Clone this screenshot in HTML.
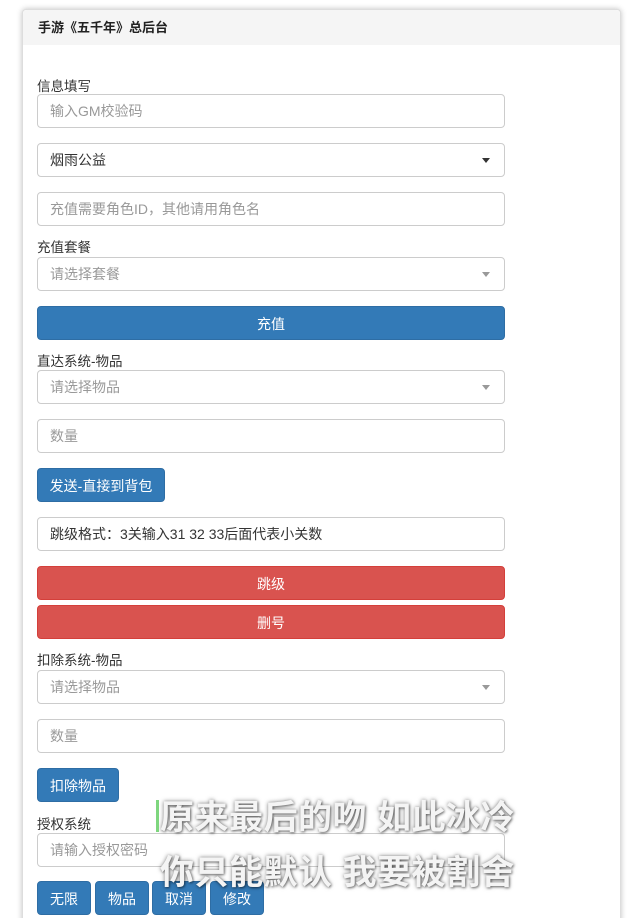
<!DOCTYPE html>
<html style="width:637px;height:918px;overflow:hidden"><head><meta charset="utf-8"><style>
*{box-sizing:border-box;margin:0;padding:0}
body{width:637px;height:918px;background:#fff;font-family:"Liberation Sans","Noto Sans CJK SC",sans-serif;font-size:14px;color:#333;position:relative;overflow:hidden}
.card{position:absolute;left:22px;top:9px;width:599px;height:920px;border:1px solid #ddd;border-radius:4px;box-shadow:0 0 6px rgba(0,0,0,.25);background:#fff}
.hd{position:absolute;left:0;top:0;right:0;height:35px;background:#f5f5f5;border-radius:4px 4px 0 0;font-weight:bold;font-size:13px;line-height:35px;padding-left:15px;color:#222}
.a{position:absolute}
.in{position:absolute;left:37px;width:468px;height:34px;border:1px solid #ccc;border-radius:4px;line-height:32px;padding-left:12px;color:#999}
.lb{position:absolute;left:37px;font-size:13.5px;color:#333}
.btn{position:absolute;height:34px;border-radius:4px;color:#fff;text-align:center;line-height:34px;background:#337ab7;border:1px solid #2e6da4}
.red{background:#d9534f;border-color:#d43f3a}
.caret{position:absolute;right:14px;top:14px;width:0;height:0;border-left:4px solid transparent;border-right:4px solid transparent;border-top:5px solid #333}
.caret.g{border-top-color:#999}
.sub{position:absolute;left:160px;font-size:34px;font-weight:bold;color:#f4f4f4;letter-spacing:0.5px;text-shadow:0 0 4px rgba(0,0,0,.5),1px 1px 2px rgba(0,0,0,.4);white-space:nowrap}
</style></head><body>
<div class="card"><div class="hd">手游《五千年》总后台</div></div>
<div class="lb" style="top:75px">信息填写</div>
<div class="in" style="top:94px">输入GM校验码</div>
<div class="in" style="top:143px;color:#333">烟雨公益<span class="caret"></span></div>
<div class="in" style="top:192px">充值需要角色ID，其他请用角色名</div>
<div class="lb" style="top:236px">充值套餐</div>
<div class="in" style="top:257px">请选择套餐<span class="caret g"></span></div>
<div class="btn" style="left:37px;top:306px;width:468px">充值</div>
<div class="lb" style="top:350px">直达系统-物品</div>
<div class="in" style="top:370px">请选择物品<span class="caret g"></span></div>
<div class="in" style="top:419px">数量</div>
<div class="btn" style="left:37px;top:468px;width:128px">发送-直接到背包</div>
<div class="in" style="top:517px;color:#333">跳级格式：3关输入31 32 33后面代表小关数</div>
<div class="btn red" style="left:37px;top:566px;width:468px">跳级</div>
<div class="btn red" style="left:37px;top:605px;width:468px">删号</div>
<div class="lb" style="top:649px">扣除系统-物品</div>
<div class="in" style="top:670px">请选择物品<span class="caret g"></span></div>
<div class="in" style="top:719px">数量</div>
<div class="btn" style="left:37px;top:768px;width:82px">扣除物品</div>
<div class="lb" style="top:813px">授权系统</div>
<div class="in" style="top:833px">请输入授权密码</div>
<div class="btn" style="left:37px;top:881px;width:54px">无限</div>
<div class="btn" style="left:95px;top:881px;width:54px">物品</div>
<div class="btn" style="left:152px;top:881px;width:54px">取消</div>
<div class="btn" style="left:210px;top:881px;width:54px">修改</div>
<div class="sub" style="top:790px">原来最后的吻 如此冰冷</div>
<div class="sub" style="top:845px">你只能默认 我要被割舍</div>
<div class="a" style="left:156px;top:800px;width:3px;height:32px;background:#7ed67e"></div>
</body></html>
